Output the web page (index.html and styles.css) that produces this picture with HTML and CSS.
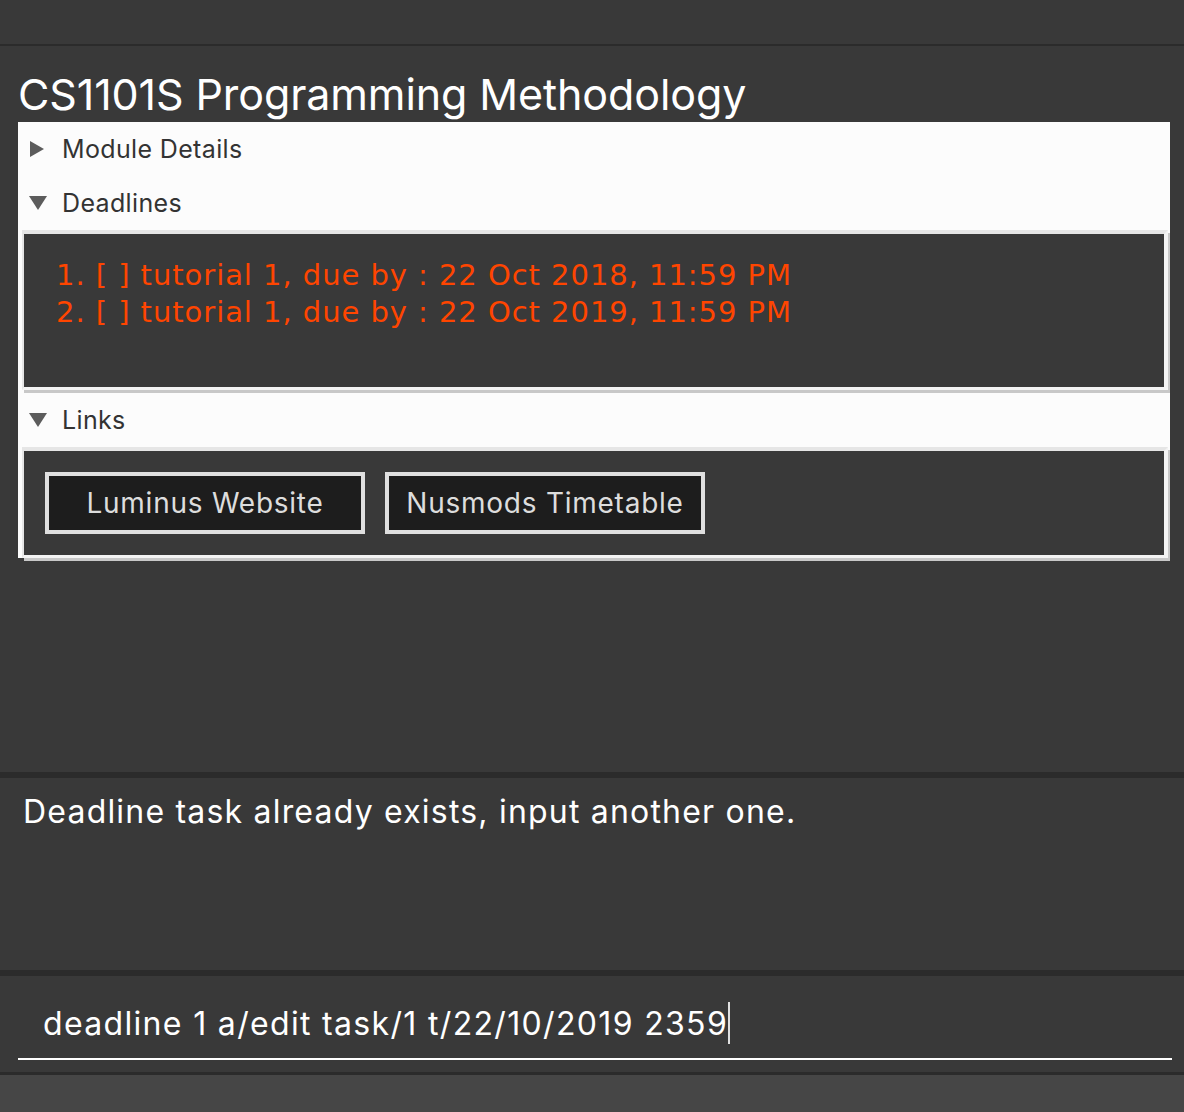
FILE: index.html
```html
<!DOCTYPE html>
<html>
<head>
<meta charset="utf-8">
<link rel="stylesheet" href="styles.css">
</head>
<body>
<div class="topbar"></div>
<div class="main">
  <h1 class="title">CS1101S Programming Methodology</h1>
  <div class="panel">
    <div class="pane-header"><span class="tri tri-right"></span><span>Module Details</span></div>
    <div class="pane-header"><span class="tri tri-down"></span><span>Deadlines</span></div>
    <div class="content deadlines">
      <div class="dl">1. [ ] tutorial 1, due by : 22 Oct 2018, 11:59 PM</div>
      <div class="dl">2. [ ] tutorial 1, due by : 22 Oct 2019, 11:59 PM</div>
    </div>
    <div class="pane-header"><span class="tri tri-down"></span><span>Links</span></div>
    <div class="content links">
      <div class="btn">Luminus Website</div>
      <div class="btn">Nusmods Timetable</div>
    </div>
  </div>
</div>
<div class="result">Deadline task already exists, input another one.</div>
<div class="command">
  <div class="cmd-field"><span class="cmd-text">deadline 1 a/edit task/1 t/22/10/2019 2359</span><span class="caret"></span></div>
</div>
<div class="statusbar"></div>
</body>
</html>
```
FILE: styles.css
```css
html, body {
  margin: 0;
  padding: 0;
  background: #393939;
  font-family: Inter, "Open Sans", sans-serif;
}
.topbar {
  height: 44px;
  background: #393939;
  border-bottom: 2px solid #2b2b2b;
}
.main {
  height: 726px;
  background: #393939;
  padding: 0 14px 0 18px;
  box-sizing: border-box;
}
.title {
  margin: 0;
  height: 76px;
  box-sizing: border-box;
  padding: 22px 0 0 0;
  font-size: 43px;
  font-weight: 400;
  line-height: 52px;
  color: #ffffff;
  white-space: nowrap;
  letter-spacing: -0.1px;
}
.panel {
  background: #fcfcfc;
}
.pane-header {
  height: 54px;
  display: flex;
  align-items: center;
  padding-left: 12px;
  font-size: 25px;
  letter-spacing: 0.35px;
  color: #333333;
}
.tri {
  display: inline-block;
  width: 0;
  height: 0;
}
.tri-right {
  border-top: 8px solid transparent;
  border-bottom: 8px solid transparent;
  border-left: 14px solid #5c5c5c;
  margin-left: 0;
  margin-right: 18px;
}
.tri-down {
  border-left: 9px solid transparent;
  border-right: 9px solid transparent;
  border-top: 14px solid #5c5c5c;
  margin-left: -1px;
  margin-right: 15px;
}
.content {
  background: #393939;
  border-style: solid;
  border-width: 4px 4px 3px 2px;
  border-color: #e6e6e6 #f4f4f4 #f4f4f4 #e6e6e6;
  margin: 0 2px 3px 4px;
  box-shadow: 2px 3px 0 #c8c8c8;
}
.deadlines {
  box-sizing: content-box;
  padding: 23px 0 0 32px;
  height: 130px;
}
.dl {
  font-family: "DejaVu Sans", Verdana, sans-serif;
  font-size: 29px;
  line-height: 37px;
  letter-spacing: 0.95px;
  color: #ff4500;
  white-space: nowrap;
}
.links {
  height: 83px;
  box-sizing: content-box;
  padding: 21px 0 0 21px;
  display: flex;
  gap: 20px;
  align-items: flex-start;
}
.btn {
  width: 320px;
  height: 62px;
  box-sizing: border-box;
  border: 4px solid #e0e0e0;
  background: #1d1d1d;
  color: #dddddd;
  font-size: 28px;
  display: flex;
  align-items: center;
  justify-content: center;
  letter-spacing: 0.75px;
}
.result {
  border-top: 6px solid #2b2b2b;
  height: 192px;
  box-sizing: content-box;
  padding: 0 0 0 23px;
  background: #393939;
  color: #ffffff;
  font-size: 32px;
  line-height: 68px;
  letter-spacing: 1.2px;
  white-space: nowrap;
}
.command {
  border-top: 6px solid #2b2b2b;
  height: 96px;
  padding: 0 12px 0 18px;
  background: #393939;
}
.cmd-field {
  height: 84px;
  border-bottom: 2px solid #ffffff;
  display: flex;
  align-items: flex-end;
  padding: 0 0 14px 25px;
  box-sizing: border-box;
  color: #ffffff;
  font-size: 32px;
  letter-spacing: 1.33px;
}
.cmd-text {
  line-height: 40px;
  white-space: nowrap;
}
.caret {
  display: inline-block;
  width: 2px;
  height: 42px;
  background: #e0e0e0;
  margin-left: 0;
}
.statusbar {
  border-top: 3px solid #2b2b2b;
  height: 37px;
  background: #464646;
}
```
